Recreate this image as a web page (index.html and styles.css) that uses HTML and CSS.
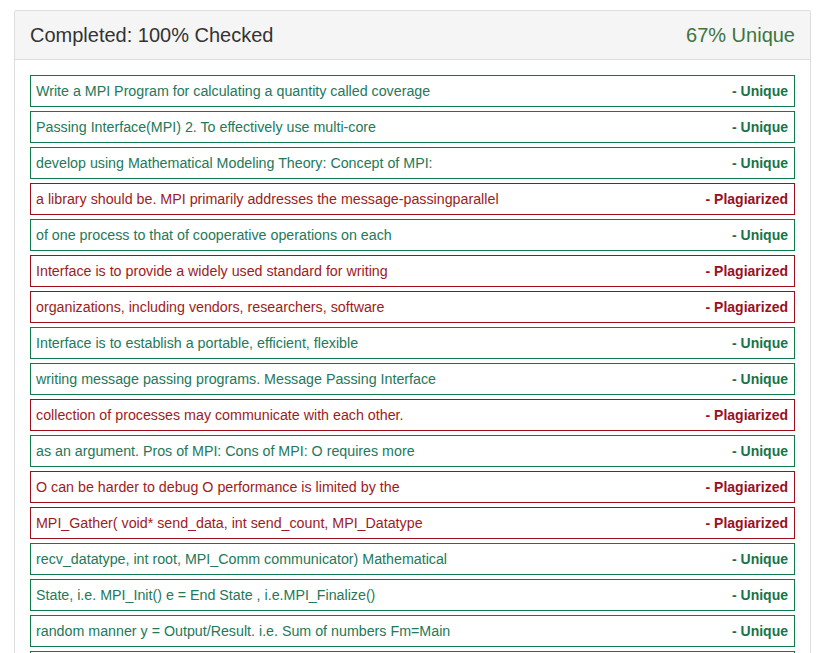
FILE: index.html
```html
<!DOCTYPE html>
<html>
<head>
<meta charset="utf-8">
<link rel="stylesheet" href="styles.css">
</head>
<body>
<div class="panel">
  <div class="panel-heading">
    <span class="title">Completed: 100% Checked</span>
    <span class="score">67% Unique</span>
  </div>
  <div class="panel-body">
    <div class="row unique"><span>Write a MPI Program for calculating a quantity called coverage</span><b>- Unique</b></div>
    <div class="row unique"><span>Passing Interface(MPI) 2. To effectively use multi-core</span><b>- Unique</b></div>
    <div class="row unique"><span>develop using Mathematical Modeling Theory: Concept of MPI:</span><b>- Unique</b></div>
    <div class="row plag"><span>a library should be. MPI primarily addresses the message-passingparallel</span><b>- Plagiarized</b></div>
    <div class="row unique"><span>of one process to that of cooperative operations on each</span><b>- Unique</b></div>
    <div class="row plag"><span>Interface is to provide a widely used standard for writing</span><b>- Plagiarized</b></div>
    <div class="row plag"><span>organizations, including vendors, researchers, software</span><b>- Plagiarized</b></div>
    <div class="row unique"><span>Interface is to establish a portable, efficient, flexible</span><b>- Unique</b></div>
    <div class="row unique"><span>writing message passing programs. Message Passing Interface</span><b>- Unique</b></div>
    <div class="row plag"><span>collection of processes may communicate with each other.</span><b>- Plagiarized</b></div>
    <div class="row unique"><span>as an argument. Pros of MPI: Cons of MPI: O requires more</span><b>- Unique</b></div>
    <div class="row plag"><span>O can be harder to debug O performance is limited by the</span><b>- Plagiarized</b></div>
    <div class="row plag"><span>MPI_Gather( void* send_data, int send_count, MPI_Datatype</span><b>- Plagiarized</b></div>
    <div class="row unique"><span>recv_datatype, int root, MPI_Comm communicator) Mathematical</span><b>- Unique</b></div>
    <div class="row unique"><span>State, i.e. MPI_Init() e = End State , i.e.MPI_Finalize()</span><b>- Unique</b></div>
    <div class="row unique"><span>random manner y = Output/Result. i.e. Sum of numbers Fm=Main</span><b>- Unique</b></div>
    <div class="row unique"></div>
  </div>
</div>
</body>
</html>
```
FILE: styles.css
```css
html, body {
  margin: 0;
  padding: 0;
  background: #fff;
}
body {
  padding: 10px 8px 0 14px;
  font-family: "Liberation Sans", Arial, sans-serif;
  color: #333;
}
.panel {
  width: 795px;
  border: 1px solid #ddd;
  border-radius: 2px;
  background: #fff;
}
.panel-heading {
  display: flex;
  justify-content: space-between;
  align-items: center;
  padding: 12px 15px;
  line-height: 24px;
  font-size: 20px;
  background: #f5f5f5;
  border-bottom: 1px solid #ddd;
}
.title { color: #333; }
.score { color: #3c763d; }
.panel-body {
  padding: 15px 15px 0;
  display: flex;
  flex-direction: column;
  gap: 4px;
}
.row {
  display: flex;
  justify-content: space-between;
  align-items: center;
  height: 30px;
  padding: 0 6px 0 5px;
  font-size: 14px;
  border: 1px solid;
}
.row span { font-size: 14.25px; }
.row b { font-weight: bold; }
.unique {
  border-color: #0f7a4c;
  color: #23795a;
}
.unique b { color: #16744a; }
.plag {
  border-color: #a0101c;
  color: #9e1b24;
}
.plag b { color: #9a1020; }
```
